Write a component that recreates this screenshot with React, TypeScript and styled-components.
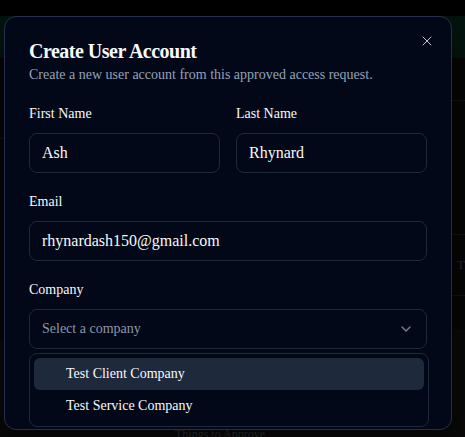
import React from 'react';
import styled, { createGlobalStyle } from 'styled-components';
import { X, ChevronDown } from 'lucide-react';

const GlobalStyle = createGlobalStyle`
  html, body { margin: 0; padding: 0; background: #050506; }
  body {
    font-family: "Liberation Serif", "Times New Roman", serif;
    width: 465px;
    height: 437px;
    overflow: hidden;
  }
  * { box-sizing: border-box; }
`;

/* ---------- dimmed page behind the modal ---------- */
const Page = styled.div`
  position: relative;
  width: 465px;
  height: 437px;
  overflow: hidden;
  background: #050506;
  display: flex;
  flex-direction: column;
`;

const TopStrip = styled.div`
  flex: none;
  height: 16px;
  background: #000000;
`;

const HeaderBar = styled.div`
  flex: none;
  height: 42px;
  background: #04140e;
`;

const BodyGrid = styled.div`
  flex: 1;
  display: grid;
  grid-template-columns: 1fr 1fr;
  min-height: 0;
`;

const Column = styled.div`
  display: flex;
  flex-direction: column;
`;

const Band = styled.div<{ $h?: number; $bg?: string; $line?: boolean }>`
  flex: ${(p) => (p.$h ? 'none' : '1')};
  height: ${(p) => (p.$h ? `${p.$h}px` : 'auto')};
  background: ${(p) => p.$bg ?? '#060607'};
  border-bottom: ${(p) => (p.$line ? '1px solid #121316' : 'none')};
  display: flex;
  align-items: center;
  padding-left: 226px;
  font-size: 13px;
  color: #1f2a2a;
`;

const FooterText = styled.div`
  position: absolute;
  left: 175px;
  top: 427px;
  font-size: 12px;
  color: #2e2e2e;
  white-space: nowrap;
`;

/* ---------- modal ---------- */
const Dialog = styled.div`
  position: absolute;
  left: 4px;
  top: 16px;
  width: 448px;
  height: 414px;
  background: #020817;
  border: 1px solid #243049;
  border-radius: 12px;
  padding: 24px;
  overflow: hidden;
  box-shadow: 0 10px 30px rgba(0, 0, 0, 0.5);
`;

const CloseButton = styled.button`
  position: absolute;
  top: 16px;
  right: 16px;
  width: 16px;
  height: 16px;
  padding: 0;
  border: none;
  background: none;
  color: #c3cad6;
  display: flex;
  align-items: center;
  justify-content: center;
  cursor: pointer;
`;

const Header = styled.div`
  display: flex;
  flex-direction: column;
  gap: 4px;
`;

const Title = styled.h2`
  margin: 0;
  font-size: 20px;
  line-height: 20px;
  font-weight: 700;
  letter-spacing: -0.5px;
  color: #f8fafc;
`;

const Description = styled.p`
  margin: 0;
  font-size: 14px;
  line-height: 20px;
  color: #94a3b8;
`;

const Form = styled.div`
  margin-top: 19px;
  display: flex;
  flex-direction: column;
  gap: 19px;
`;

const TwoCols = styled.div`
  display: grid;
  grid-template-columns: 1fr 1fr;
  gap: 16px;
`;

const Field = styled.div`
  display: flex;
  flex-direction: column;
  gap: 9px;
`;

const Label = styled.label`
  font-size: 14px;
  line-height: 20px;
  color: #f8fafc;
`;

const Input = styled.input`
  height: 40px;
  width: 100%;
  border: 1px solid #1e293b;
  border-radius: 8px;
  background: transparent;
  padding: 0 12px;
  font-family: inherit;
  font-size: 16px;
  color: #f8fafc;
  outline: none;
`;

const SelectTrigger = styled.div`
  height: 40px;
  border: 1px solid #1e293b;
  border-radius: 8px;
  padding: 0 12px;
  display: flex;
  align-items: center;
  justify-content: space-between;
  font-size: 14px;
  color: #8c97aa;
`;

const Chevron = styled(ChevronDown)`
  opacity: 0.5;
  color: #f8fafc;
`;

const Listbox = styled.div`
  position: absolute;
  left: 29px;
  top: 353px;
  width: 400px;
  height: 74px;
  border: 1px solid #1e293b;
  border-radius: 8px;
  background: #020817;
  padding: 4px;
  display: flex;
  flex-direction: column;
`;

const Option = styled.div<{ $active?: boolean }>`
  height: 32px;
  border-radius: 6px;
  padding-left: 32px;
  display: flex;
  align-items: center;
  font-size: 14px;
  color: #f8fafc;
  background: ${(p) => (p.$active ? '#1e293b' : 'transparent')};
`;

export default function App() {
  return (
    <>
      <GlobalStyle />
      <Page>
        <TopStrip />
        <HeaderBar />
        <BodyGrid>
          <Column>
            <Band $h={81} $line />
            <Band $h={199} />
            <Band $bg="#09090a" />
          </Column>
          <Column>
            <Band $h={43} $line />
            <Band $h={134} $line />
            <Band $h={61} $line>T</Band>
            <Band $h={33} />
            <Band $bg="#09090a" />
          </Column>
        </BodyGrid>
        <FooterText>Things to Approve</FooterText>

        <Dialog>
          <CloseButton aria-label="Close">
            <X size={16} strokeWidth={1.5} />
          </CloseButton>
          <Header>
            <Title>Create User Account</Title>
            <Description>Create a new user account from this approved access request.</Description>
          </Header>
          <Form>
            <TwoCols>
              <Field>
                <Label>First Name</Label>
                <Input defaultValue="Ash" />
              </Field>
              <Field>
                <Label>Last Name</Label>
                <Input defaultValue="Rhynard" />
              </Field>
            </TwoCols>
            <Field>
              <Label>Email</Label>
              <Input defaultValue="rhynardash150@gmail.com" />
            </Field>
            <Field>
              <Label>Company</Label>
              <SelectTrigger>
                <span>Select a company</span>
                <Chevron size={16} />
              </SelectTrigger>
            </Field>
          </Form>
        </Dialog>

        <Listbox role="listbox">
          <Option $active>Test Client Company</Option>
          <Option>Test Service Company</Option>
        </Listbox>
      </Page>
    </>
  );
}
